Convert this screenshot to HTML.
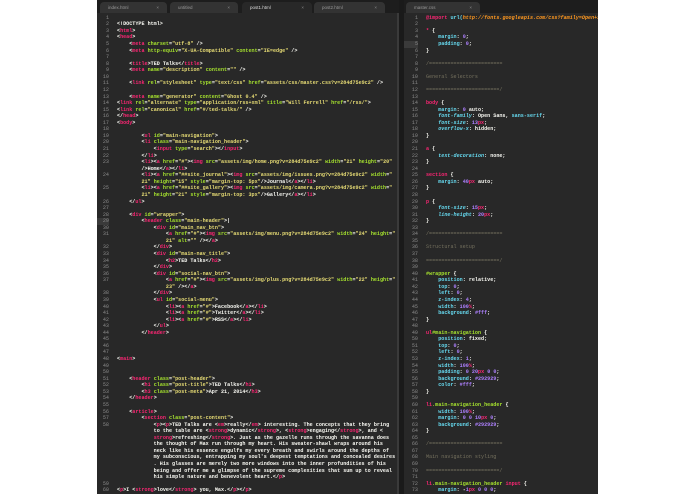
<!DOCTYPE html>
<html><head><meta charset="utf-8">
<style>
html,body{margin:0;padding:0;background:#fff;width:695px;height:494px;overflow:hidden;position:relative}
.ed{position:absolute;left:97px;top:0;width:501px;height:494px;background:#1d1d1d}
.pane{position:absolute;top:13px;bottom:0;background:#282828;overflow:hidden}
#L{left:0;width:302px}
#R{left:307px;width:194px}
.sb{position:absolute;top:13px;bottom:0;left:300px;width:2px;background:#3a3a3a}
.div{position:absolute;top:0;bottom:0;left:302px;width:5px;background:#1a1a1a}
.tab{position:absolute;top:2px;height:11px;background:#333;border-radius:4px 4px 0 0;font:4.5px "Liberation Sans",sans-serif;color:#999;line-height:11px;padding-left:8px;box-sizing:border-box}
.tab.a{background:#282828;color:#ddd}
.tab i{position:absolute;right:8px;font-style:normal;color:#888}
.code{position:absolute;top:1.8px;left:0;right:0;font:bold 5.1px/6.57px "Liberation Mono",monospace;color:#f8f8f2}
.r{height:6.57px;position:relative;white-space:nowrap}
.n{position:absolute;text-align:right;color:#8a8a8a;font-weight:normal}
.c{white-space:pre}
#L .n{left:0;width:12px}
#R .n{left:0;width:14px}
#L .c{position:absolute;left:20px}
#R .c{position:absolute;left:22px}
.hl .n{background:#3a3a3a}
.t{color:#f92672}.a{color:#a6e22e}.s{color:#e6db74}
.p{color:#66d9ef}.pi{color:#66d9ef;font-style:italic}.m{color:#ae81ff}.u{color:#f92672}.cm{color:#75715e;font-weight:normal}.o{color:#fd971f;font-style:italic}
</style></head><body>
<div class="ed">
<div class="tab" style="left:3px;width:67px">index.html<i>×</i></div>
<div class="tab" style="left:73px;width:68px">untitled<i>×</i></div>
<div class="tab a" style="left:145px;width:70px">post1.html<i>×</i></div>
<div class="tab" style="left:217px;width:71px">post2.html<i>×</i></div>
<div class="tab" style="left:309px;width:74px">master.css<i>×</i></div>

<div class="pane" id="L"><div class="code">
<div class="r"><span class="n">1</span><span class="c"></span></div>
<div class="r"><span class="n">2</span><span class="c">&lt;!DOCTYPE html&gt;</span></div>
<div class="r"><span class="n">3</span><span class="c">&lt;<span class="t">html</span>&gt;</span></div>
<div class="r"><span class="n">4</span><span class="c">&lt;<span class="t">head</span>&gt;</span></div>
<div class="r"><span class="n">5</span><span class="c">    &lt;<span class="t">meta</span> <span class="a">charset</span>=<span class="s">"utf-8"</span> /&gt;</span></div>
<div class="r"><span class="n">6</span><span class="c">    &lt;<span class="t">meta</span> <span class="a">http-equiv</span>=<span class="s">"X-UA-Compatible"</span> <span class="a">content</span>=<span class="s">"IE=edge"</span> /&gt;</span></div>
<div class="r"><span class="n">7</span><span class="c"></span></div>
<div class="r"><span class="n">8</span><span class="c">    &lt;<span class="t">title</span>&gt;TED Talks&lt;/<span class="t">title</span>&gt;</span></div>
<div class="r"><span class="n">9</span><span class="c">    &lt;<span class="t">meta</span> <span class="a">name</span>=<span class="s">"description"</span> <span class="a">content</span>=<span class="s">""</span> /&gt;</span></div>
<div class="r"><span class="n">10</span><span class="c"></span></div>
<div class="r"><span class="n">11</span><span class="c">    &lt;<span class="t">link</span> <span class="a">rel</span>=<span class="s">"stylesheet"</span> <span class="a">type</span>=<span class="s">"text/css"</span> <span class="a">href</span>=<span class="s">"assets/css/master.css?v=284d75e9c2"</span> /&gt;</span></div>
<div class="r"><span class="n">12</span><span class="c"></span></div>
<div class="r"><span class="n">13</span><span class="c">    &lt;<span class="t">meta</span> <span class="a">name</span>=<span class="s">"generator"</span> <span class="a">content</span>=<span class="s">"Ghost 0.4"</span> /&gt;</span></div>
<div class="r"><span class="n">14</span><span class="c">&lt;<span class="t">link</span> <span class="a">rel</span>=<span class="s">"alternate"</span> <span class="a">type</span>=<span class="s">"application/rss+xml"</span> <span class="a">title</span>=<span class="s">"Will Ferrell"</span> <span class="a">href</span>=<span class="s">"/rss/"</span>&gt;</span></div>
<div class="r"><span class="n">15</span><span class="c">&lt;<span class="t">link</span> <span class="a">rel</span>=<span class="s">"canonical"</span> <span class="a">href</span>=<span class="s">"#/ted-talks/"</span> /&gt;</span></div>
<div class="r"><span class="n">16</span><span class="c">&lt;/<span class="t">head</span>&gt;</span></div>
<div class="r"><span class="n">17</span><span class="c">&lt;<span class="t">body</span>&gt;</span></div>
<div class="r"><span class="n">18</span><span class="c"></span></div>
<div class="r"><span class="n">19</span><span class="c">        &lt;<span class="t">ul</span> <span class="a">id</span>=<span class="s">"main-navigation"</span>&gt;</span></div>
<div class="r"><span class="n">20</span><span class="c">        &lt;<span class="t">li</span> <span class="a">class</span>=<span class="s">"main-navigation_header"</span>&gt;</span></div>
<div class="r"><span class="n">21</span><span class="c">            &lt;<span class="t">input</span> <span class="a">type</span>=<span class="s">"search"</span>&gt;&lt;/<span class="t">input</span>&gt;</span></div>
<div class="r"><span class="n">22</span><span class="c">        &lt;/<span class="t">li</span>&gt;</span></div>
<div class="r"><span class="n">23</span><span class="c">        &lt;<span class="t">li</span>&gt;&lt;<span class="t">a</span> <span class="a">href</span>=<span class="s">"#"</span>&gt;&lt;<span class="t">img</span> <span class="a">src</span>=<span class="s">"assets/img/home.png?v=284d75e9c2"</span> <span class="a">width</span>=<span class="s">"21"</span> <span class="a">height</span>=<span class="s">"20"</span></span></div>
<div class="r"><span class="n"></span><span class="c">        /&gt;Home&lt;/<span class="t">a</span>&gt;&lt;/<span class="t">li</span>&gt;</span></div>
<div class="r"><span class="n">24</span><span class="c">        &lt;<span class="t">li</span>&gt;&lt;<span class="t">a</span> <span class="a">href</span>=<span class="s">"##site_journal"</span>&gt;&lt;<span class="t">img</span> <span class="a">src</span>=<span class="s">"assets/img/issues.png?v=284d75e9c2"</span> <span class="a">width</span>=<span class="s">"</span></span></div>
<div class="r"><span class="n"></span><span class="c">        <span class="s">21"</span> <span class="a">height</span>=<span class="s">"15"</span> <span class="a">style</span>=<span class="s">"margin-top: 5px"</span>/&gt;Journal&lt;/<span class="t">a</span>&gt;&lt;/<span class="t">li</span>&gt;</span></div>
<div class="r"><span class="n">25</span><span class="c">        &lt;<span class="t">li</span>&gt;&lt;<span class="t">a</span> <span class="a">href</span>=<span class="s">"##site_gallery"</span>&gt;&lt;<span class="t">img</span> <span class="a">src</span>=<span class="s">"assets/img/camera.png?v=284d75e9c2"</span> <span class="a">width</span>=<span class="s">"</span></span></div>
<div class="r"><span class="n"></span><span class="c">        <span class="s">21"</span> <span class="a">height</span>=<span class="s">"21"</span> <span class="a">style</span>=<span class="s">"margin-top: 3px"</span>/&gt;Gallery&lt;/<span class="t">a</span>&gt;&lt;/<span class="t">li</span>&gt;</span></div>
<div class="r"><span class="n">26</span><span class="c">    &lt;/<span class="t">ul</span>&gt;</span></div>
<div class="r"><span class="n">27</span><span class="c"></span></div>
<div class="r"><span class="n">28</span><span class="c">    &lt;<span class="t">div</span> <span class="a">id</span>=<span class="s">"wrapper"</span>&gt;</span></div>
<div class="r hl"><span class="n">29</span><span class="c">        &lt;<span class="t">header</span> <span class="a">class</span>=<span class="s">"main-header"</span>&gt;|</span></div>
<div class="r"><span class="n">30</span><span class="c">            &lt;<span class="t">div</span> <span class="a">id</span>=<span class="s">"main_nav_btn"</span>&gt;</span></div>
<div class="r"><span class="n">31</span><span class="c">                &lt;<span class="t">a</span> <span class="a">href</span>=<span class="s">"#"</span>&gt;&lt;<span class="t">img</span> <span class="a">src</span>=<span class="s">"assets/img/menu.png?v=284d75e9c2"</span> <span class="a">width</span>=<span class="s">"24"</span> <span class="a">height</span>=<span class="s">"</span></span></div>
<div class="r"><span class="n"></span><span class="c">                <span class="s">21"</span> <span class="a">alt</span>=<span class="s">""</span> /&gt;&lt;/<span class="t">a</span>&gt;</span></div>
<div class="r"><span class="n">32</span><span class="c">            &lt;/<span class="t">div</span>&gt;</span></div>
<div class="r"><span class="n">33</span><span class="c">            &lt;<span class="t">div</span> <span class="a">id</span>=<span class="s">"main-nav_title"</span>&gt;</span></div>
<div class="r"><span class="n">34</span><span class="c">                &lt;<span class="t">h2</span>&gt;TED Talks&lt;/<span class="t">h2</span>&gt;</span></div>
<div class="r"><span class="n">35</span><span class="c">            &lt;/<span class="t">div</span>&gt;</span></div>
<div class="r"><span class="n">36</span><span class="c">            &lt;<span class="t">div</span> <span class="a">id</span>=<span class="s">"social-nav_btn"</span>&gt;</span></div>
<div class="r"><span class="n">37</span><span class="c">                &lt;<span class="t">a</span> <span class="a">href</span>=<span class="s">"#"</span>&gt;&lt;<span class="t">img</span> <span class="a">src</span>=<span class="s">"assets/img/plus.png?v=284d75e9c2"</span> <span class="a">width</span>=<span class="s">"22"</span> <span class="a">height</span>=<span class="s">"</span></span></div>
<div class="r"><span class="n"></span><span class="c">                <span class="s">23"</span> /&gt;&lt;/<span class="t">a</span>&gt;</span></div>
<div class="r"><span class="n">38</span><span class="c">            &lt;/<span class="t">div</span>&gt;</span></div>
<div class="r"><span class="n">39</span><span class="c">            &lt;<span class="t">ul</span> <span class="a">id</span>=<span class="s">"social-menu"</span>&gt;</span></div>
<div class="r"><span class="n">40</span><span class="c">                &lt;<span class="t">li</span>&gt;&lt;<span class="t">a</span> <span class="a">href</span>=<span class="s">"#"</span>&gt;Facebook&lt;/<span class="t">a</span>&gt;&lt;/<span class="t">li</span>&gt;</span></div>
<div class="r"><span class="n">41</span><span class="c">                &lt;<span class="t">li</span>&gt;&lt;<span class="t">a</span> <span class="a">href</span>=<span class="s">"#"</span>&gt;Twitter&lt;/<span class="t">a</span>&gt;&lt;/<span class="t">li</span>&gt;</span></div>
<div class="r"><span class="n">42</span><span class="c">                &lt;<span class="t">li</span>&gt;&lt;<span class="t">a</span> <span class="a">href</span>=<span class="s">"#"</span>&gt;RSS&lt;/<span class="t">a</span>&gt;&lt;/<span class="t">li</span>&gt;</span></div>
<div class="r"><span class="n">43</span><span class="c">            &lt;/<span class="t">ul</span>&gt;</span></div>
<div class="r"><span class="n">44</span><span class="c">        &lt;/<span class="t">header</span>&gt;</span></div>
<div class="r"><span class="n">45</span><span class="c"></span></div>
<div class="r"><span class="n">46</span><span class="c"></span></div>
<div class="r"><span class="n">47</span><span class="c"></span></div>
<div class="r"><span class="n">48</span><span class="c">&lt;<span class="t">main</span>&gt;</span></div>
<div class="r"><span class="n">49</span><span class="c"></span></div>
<div class="r"><span class="n">50</span><span class="c"></span></div>
<div class="r"><span class="n">51</span><span class="c">    &lt;<span class="t">header</span> <span class="a">class</span>=<span class="s">"post-header"</span>&gt;</span></div>
<div class="r"><span class="n">52</span><span class="c">        &lt;<span class="t">h1</span> <span class="a">class</span>=<span class="s">"post-title"</span>&gt;TED Talks&lt;/<span class="t">h1</span>&gt;</span></div>
<div class="r"><span class="n">53</span><span class="c">        &lt;<span class="t">h3</span> <span class="a">class</span>=<span class="s">"post-meta"</span>&gt;Apr 21, 2014&lt;/<span class="t">h3</span>&gt;</span></div>
<div class="r"><span class="n">54</span><span class="c">    &lt;/<span class="t">header</span>&gt;</span></div>
<div class="r"><span class="n">55</span><span class="c"></span></div>
<div class="r"><span class="n">56</span><span class="c">    &lt;<span class="t">article</span>&gt;</span></div>
<div class="r"><span class="n">57</span><span class="c">        &lt;<span class="t">section</span> <span class="a">class</span>=<span class="s">"post-content"</span>&gt;</span></div>
<div class="r"><span class="n">58</span><span class="c">            &lt;<span class="t">p</span>&gt;&lt;<span class="t">p</span>&gt;TED Talks are &lt;<span class="t">em</span>&gt;really&lt;/<span class="t">em</span>&gt; interesting. The concepts that they bring</span></div>
<div class="r"><span class="n"></span><span class="c">            to the table are &lt;<span class="t">strong</span>&gt;dynamic&lt;/<span class="t">strong</span>&gt;, &lt;<span class="t">strong</span>&gt;engaging&lt;/<span class="t">strong</span>&gt;, and &lt;</span></div>
<div class="r"><span class="n"></span><span class="c">            <span class="t">strong</span>&gt;refreshing&lt;/<span class="t">strong</span>&gt;. Just as the gazelle runs through the savanna does</span></div>
<div class="r"><span class="n"></span><span class="c">            the thought of Max run through my heart. His sweater-shawl wraps around his</span></div>
<div class="r"><span class="n"></span><span class="c">            neck like his essence engulfs my every breath and swirls around the depths of</span></div>
<div class="r"><span class="n"></span><span class="c">            my subconscious, entrapping my soul's deepest temptations and concealed desires</span></div>
<div class="r"><span class="n"></span><span class="c">            . His glasses are merely two more windows into the inner profundities of his</span></div>
<div class="r"><span class="n"></span><span class="c">            being and offer me a glimpse of the supreme complexities that sum up to reveal</span></div>
<div class="r"><span class="n"></span><span class="c">            his simple nature and benevolent heart.&lt;/<span class="t">p</span>&gt;</span></div>
<div class="r"><span class="n">59</span><span class="c"></span></div>
<div class="r"><span class="n">60</span><span class="c">&lt;<span class="t">p</span>&gt;I &lt;<span class="t">strong</span>&gt;love&lt;/<span class="t">strong</span>&gt; you, Max.&lt;/<span class="t">p</span>&gt;&lt;/<span class="t">p</span>&gt;</span></div>
</div></div>
<div class="sb"></div>
<div class="div"></div>

<div class="pane" id="R"><div class="code">
<div class="r"><span class="n">1</span><span class="c"><span class="t">@import</span> <span class="p">url(</span><span class="o">http://fonts.googleapis.com/css?family=Open+Sans</span></span></div>
<div class="r"><span class="n">2</span><span class="c"></span></div>
<div class="r"><span class="n">3</span><span class="c"><span class="t">*</span> {</span></div>
<div class="r"><span class="n">4</span><span class="c">    <span class="p">margin</span>: <span class="m">0</span>;</span></div>
<div class="r hl"><span class="n">5</span><span class="c">    <span class="p">padding</span>: <span class="m">0</span>;</span></div>
<div class="r"><span class="n">6</span><span class="c">}</span></div>
<div class="r"><span class="n">7</span><span class="c"></span></div>
<div class="r"><span class="n">8</span><span class="c cm">/========================</span></div>
<div class="r"><span class="n">9</span><span class="c"></span></div>
<div class="r"><span class="n">10</span><span class="c cm">General Selectors</span></div>
<div class="r"><span class="n">11</span><span class="c"></span></div>
<div class="r"><span class="n">12</span><span class="c cm">========================/</span></div>
<div class="r"><span class="n">13</span><span class="c"></span></div>
<div class="r"><span class="n">14</span><span class="c"><span class="t">body</span> {</span></div>
<div class="r"><span class="n">15</span><span class="c">    <span class="p">margin</span>: <span class="m">0</span> auto;</span></div>
<div class="r"><span class="n">16</span><span class="c">    <span class="pi">font-family</span>: Open Sans, <span class="p">sans-serif</span>;</span></div>
<div class="r"><span class="n">17</span><span class="c">    <span class="pi">font-size</span>: <span class="m">13</span><span class="u">px</span>;</span></div>
<div class="r"><span class="n">18</span><span class="c">    <span class="pi">overflow-x</span>: hidden;</span></div>
<div class="r"><span class="n">19</span><span class="c">}</span></div>
<div class="r"><span class="n">20</span><span class="c"></span></div>
<div class="r"><span class="n">21</span><span class="c"><span class="t">a</span> {</span></div>
<div class="r"><span class="n">22</span><span class="c">    <span class="pi">text-decoration</span>: none;</span></div>
<div class="r"><span class="n">23</span><span class="c">}</span></div>
<div class="r"><span class="n">24</span><span class="c"></span></div>
<div class="r"><span class="n">25</span><span class="c"><span class="t">section</span> {</span></div>
<div class="r"><span class="n">26</span><span class="c">    <span class="p">margin</span>: <span class="m">40</span><span class="u">px</span> auto;</span></div>
<div class="r"><span class="n">27</span><span class="c">}</span></div>
<div class="r"><span class="n">28</span><span class="c"></span></div>
<div class="r"><span class="n">29</span><span class="c"><span class="t">p</span> {</span></div>
<div class="r"><span class="n">30</span><span class="c">    <span class="pi">font-size</span>: <span class="m">15</span><span class="u">px</span>;</span></div>
<div class="r"><span class="n">31</span><span class="c">    <span class="pi">line-height</span>: <span class="m">20</span><span class="u">px</span>;</span></div>
<div class="r"><span class="n">32</span><span class="c">}</span></div>
<div class="r"><span class="n">33</span><span class="c"></span></div>
<div class="r"><span class="n">34</span><span class="c cm">/========================</span></div>
<div class="r"><span class="n">35</span><span class="c"></span></div>
<div class="r"><span class="n">36</span><span class="c cm">Structural setup</span></div>
<div class="r"><span class="n">37</span><span class="c"></span></div>
<div class="r"><span class="n">38</span><span class="c cm">========================/</span></div>
<div class="r"><span class="n">39</span><span class="c"></span></div>
<div class="r"><span class="n">40</span><span class="c"><span class="a">#wrapper</span> {</span></div>
<div class="r"><span class="n">41</span><span class="c">    <span class="p">position</span>: relative;</span></div>
<div class="r"><span class="n">42</span><span class="c">    <span class="p">top</span>: <span class="m">0</span>;</span></div>
<div class="r"><span class="n">43</span><span class="c">    <span class="p">left</span>: <span class="m">0</span>;</span></div>
<div class="r"><span class="n">44</span><span class="c">    <span class="p">z-index</span>: <span class="m">4</span>;</span></div>
<div class="r"><span class="n">45</span><span class="c">    <span class="p">width</span>: <span class="m">100</span><span class="u">%</span>;</span></div>
<div class="r"><span class="n">46</span><span class="c">    <span class="p">background</span>: <span class="m">#fff</span>;</span></div>
<div class="r"><span class="n">47</span><span class="c">}</span></div>
<div class="r"><span class="n">48</span><span class="c"></span></div>
<div class="r"><span class="n">49</span><span class="c"><span class="t">ul</span><span class="a">#main-navigation</span> {</span></div>
<div class="r"><span class="n">50</span><span class="c">    <span class="p">position</span>: fixed;</span></div>
<div class="r"><span class="n">51</span><span class="c">    <span class="p">top</span>: <span class="m">0</span>;</span></div>
<div class="r"><span class="n">52</span><span class="c">    <span class="p">left</span>: <span class="m">0</span>;</span></div>
<div class="r"><span class="n">53</span><span class="c">    <span class="p">z-index</span>: <span class="m">1</span>;</span></div>
<div class="r"><span class="n">54</span><span class="c">    <span class="p">width</span>: <span class="m">100</span><span class="u">%</span>;</span></div>
<div class="r"><span class="n">55</span><span class="c">    <span class="p">padding</span>: <span class="m">0</span> <span class="m">20</span><span class="u">px</span> <span class="m">0</span> <span class="m">0</span>;</span></div>
<div class="r"><span class="n">56</span><span class="c">    <span class="p">background</span>: <span class="m">#292929</span>;</span></div>
<div class="r"><span class="n">57</span><span class="c">    <span class="p">color</span>: <span class="m">#fff</span>;</span></div>
<div class="r"><span class="n">58</span><span class="c">}</span></div>
<div class="r"><span class="n">59</span><span class="c"></span></div>
<div class="r"><span class="n">60</span><span class="c"><span class="t">li</span><span class="a">.main-navigation_header</span> {</span></div>
<div class="r"><span class="n">61</span><span class="c">    <span class="p">width</span>: <span class="m">100</span><span class="u">%</span>;</span></div>
<div class="r"><span class="n">62</span><span class="c">    <span class="p">margin</span>: <span class="m">0</span> <span class="m">0</span> <span class="m">10</span><span class="u">px</span> <span class="m">0</span>;</span></div>
<div class="r"><span class="n">63</span><span class="c">    <span class="p">background</span>: <span class="m">#292929</span>;</span></div>
<div class="r"><span class="n">64</span><span class="c">}</span></div>
<div class="r"><span class="n">65</span><span class="c"></span></div>
<div class="r"><span class="n">66</span><span class="c cm">/========================</span></div>
<div class="r"><span class="n">67</span><span class="c"></span></div>
<div class="r"><span class="n">68</span><span class="c cm">Main navigation styling</span></div>
<div class="r"><span class="n">69</span><span class="c"></span></div>
<div class="r"><span class="n">70</span><span class="c cm">========================/</span></div>
<div class="r"><span class="n">71</span><span class="c"></span></div>
<div class="r"><span class="n">72</span><span class="c"><span class="t">li</span><span class="a">.main-navigation_header</span> <span class="t">input</span> {</span></div>
<div class="r"><span class="n">73</span><span class="c">    <span class="p">margin</span>: -<span class="m">1</span><span class="u">px</span> <span class="m">0</span> <span class="m">0</span> <span class="m">0</span>;</span></div>
</div></div>
</div>
</body></html>
